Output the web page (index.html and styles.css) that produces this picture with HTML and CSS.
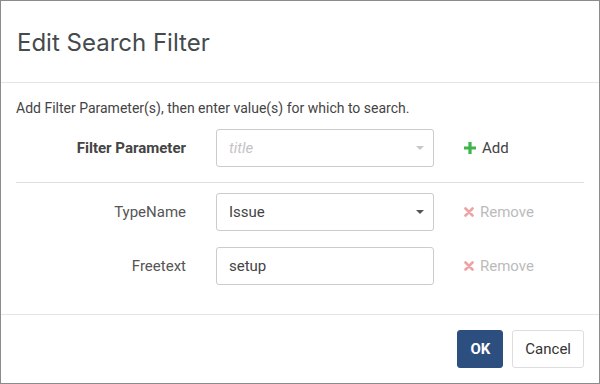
FILE: index.html
```html
<!DOCTYPE html>
<html lang="en">
<head>
  <meta charset="UTF-8">
  <title>Edit Search Filter</title>
  <link rel="stylesheet" href="styles.css">
</head>
<body>
  <div class="modal">
    <div class="modal-header">
      <h1>Edit Search Filter</h1>
    </div>
    <div class="modal-body">
      <p class="hint">Add Filter Parameter(s), then enter value(s) for which to search.</p>
      <div class="row">
        <label class="row-label bold">Filter Parameter</label>
        <div class="control select empty">
          <span class="placeholder">title</span>
          <span class="caret"></span>
        </div>
        <a class="action add">
          <svg class="icon" width="12" height="12" viewBox="0 0 12 12"><path d="M4.4 0h3.2v4.4H12v3.2H7.6V12H4.4V7.6H0V4.4h4.4z" fill="#3db54a"/></svg>
          Add
        </a>
      </div>
      <hr>
      <div class="row">
        <label class="row-label">TypeName</label>
        <div class="control select">
          <span>Issue</span>
          <span class="caret"></span>
        </div>
        <a class="action remove">
          <svg class="icon" width="10" height="10" viewBox="0 0 10 10"><path d="M1.5 1.5l7 7M8.5 1.5l-7 7" stroke="#eba3a3" stroke-width="2.6" stroke-linecap="round"/></svg>
          Remove
        </a>
      </div>
      <div class="row">
        <label class="row-label">Freetext</label>
        <div class="control">
          <span>setup</span>
        </div>
        <a class="action remove">
          <svg class="icon" width="10" height="10" viewBox="0 0 10 10"><path d="M1.5 1.5l7 7M8.5 1.5l-7 7" stroke="#eba3a3" stroke-width="2.6" stroke-linecap="round"/></svg>
          Remove
        </a>
      </div>
    </div>
    <div class="modal-footer">
      <button class="btn primary">OK</button>
      <button class="btn">Cancel</button>
    </div>
  </div>
</body>
</html>
```

FILE: styles.css
```css
body {
  margin: 0;
  font-family: Roboto, 'Liberation Sans', sans-serif;
  background: #fff;
}
.modal {
  width: 600px;
  height: 384px;
  box-sizing: border-box;
  border: 1px solid #8c8c8c;
  background: #fff;
}
.modal-header {
  height: 81px;
  border-bottom: 1px solid #e5e5e5;
  padding: 0 16px;
  display: flex;
  align-items: center;
}
.modal-header h1 {
  margin: 0;
  font-family: Inter, Roboto, sans-serif;
  font-size: 24px;
  font-weight: 400;
  color: #454a4d;
  position: relative;
  top: 1px;
}
.modal-body {
  height: 216px;
  padding: 15px 15px 0 15px;
}
.hint {
  margin: 0 0 11px 0;
  font-size: 14px;
  line-height: 20px;
  color: #444;
}
.row {
  display: grid;
  grid-template-columns: 170px 218px auto;
  column-gap: 30px;
  align-items: center;
  height: 38px;
  margin-bottom: 16px;
}
.row-label {
  text-align: right;
  font-size: 15px;
  color: #555;
}
.row-label.bold {
  font-weight: 700;
  color: #444;
}
.control {
  height: 38px;
  box-sizing: border-box;
  border: 1px solid #ccc;
  border-radius: 3px;
  display: flex;
  align-items: center;
  padding: 0 9px 0 12px;
  font-size: 15px;
  color: #444;
}
.select {
  justify-content: space-between;
}
.placeholder {
  font-style: italic;
  color: #c4c4c4;
}
.caret {
  width: 0;
  height: 0;
  border-left: 4px solid transparent;
  border-right: 4px solid transparent;
  border-top: 4px solid #555;
}
.empty .caret {
  border-top-color: #c8c8c8;
}
.action {
  font-size: 15px;
  display: flex;
  align-items: center;
  gap: 6px;
}
.add {
  color: #444;
}
.remove {
  color: #bbb;
}
.icon {
  display: block;
}
hr {
  border: 0;
  border-top: 1px solid #ddd;
  margin: -1px 0 10px 0;
}
.modal-footer {
  border-top: 1px solid #e5e5e5;
  padding: 15px 15px 0 15px;
  display: flex;
  justify-content: flex-end;
  gap: 9px;
}
.btn {
  height: 38px;
  padding: 0 12px;
  font-family: Roboto, sans-serif;
  font-size: 15px;
  color: #333;
  background: #fff;
  border: 1px solid #ddd;
  border-radius: 3px;
}
.btn.primary {
  background: #2d4f80;
  border-color: #2d4f80;
  color: #fff;
  font-weight: 700;
}
```
